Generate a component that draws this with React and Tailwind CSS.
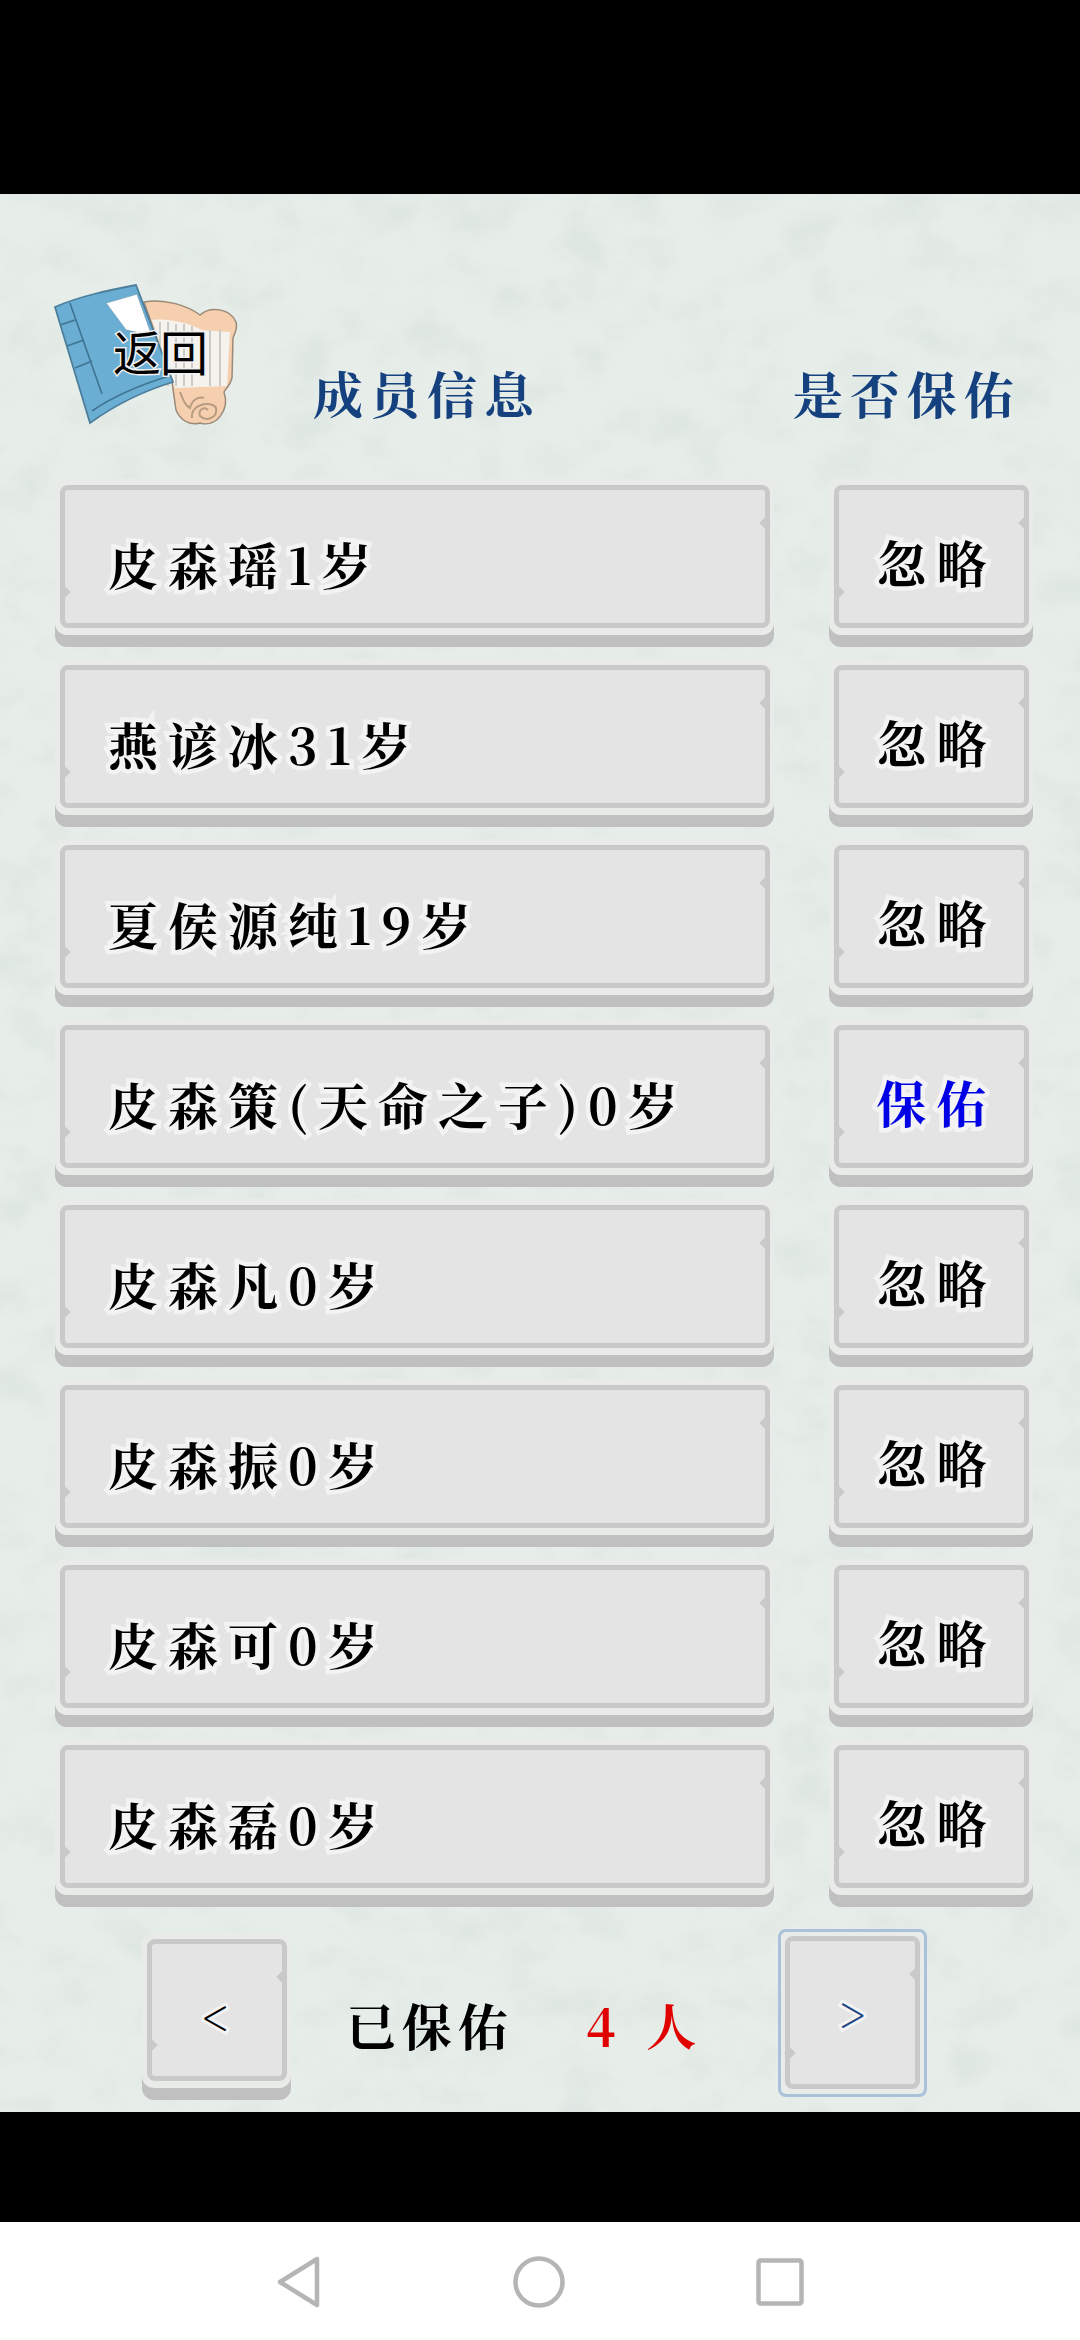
import React from "react";

const serif = "[font-family:'Noto_Serif_CJK_SC','Liberation_Serif','Noto_Sans_CJK_SC',serif]";

const members = [
  ["皮森瑶1岁", false],
  ["燕谚冰31岁", false],
  ["夏侯源纯19岁", false],
  ["皮森策(天命之子)0岁", true],
  ["皮森凡0岁", false],
  ["皮森振0岁", false],
  ["皮森可0岁", false],
  ["皮森磊0岁", false],
];

function Notches() {
  return (
    <>
      <span className="absolute right-[-4px] top-[29px] w-[8px] h-[8px] rotate-45 bg-[#c9c9c9]" />
      <span className="absolute left-[-4px] bottom-[27px] w-[8px] h-[8px] rotate-45 bg-[#c9c9c9]" />
    </>
  );
}

function Card({ className = "", inner = "", children }) {
  return (
    <button className={`block shrink-0 rounded-[12px] bg-[#e9ebe9] pt-[6px] pl-[5px] pr-[4px] pb-[7px] shadow-[0_12px_0_#c0c0c0] ${className}`}>
      <div className={`relative h-full rounded-[8px] border-[5px] border-[#c9c9c9] bg-[#e4e4e4] flex items-center ${inner}`}>
        <Notches />
        {children}
      </div>
    </button>
  );
}

function Book() {
  return (
    <svg viewBox="0 0 210 170" className="w-[210px] h-[170px]">
      <path d="M104 32 C125 28 148 36 160 45 C170 36 190 38 196 52 C198 60 194 64 193 68 L192 108 C190 116 186 118 184 122 C190 140 176 158 160 153 C150 156 140 150 136 140 L132 112 Z" fill="#f5cfae" stroke="#9b8a78" strokeWidth="1.5" />
      <path d="M112 50 C130 48 150 54 162 60 L190 62 L187 116 L135 118 Z" fill="#f6f3ee" />
      <path d="M120 52 V116 M128 52 V116 M136 54 V116 M144 54 V116 M152 56 V116 M170 60 V116 M180 60 V116" stroke="#c8cbc7" strokeWidth="2" />
      <path d="M140 122 C144 132 146 136 150 138 C152 130 158 126 164 128 M152 148 C150 134 172 130 176 138 C178 148 166 152 160 146 C158 140 164 136 168 140" fill="none" stroke="#b89c82" strokeWidth="2" />
      <path d="M15 37 C40 26 70 20 96 15 L133 112 C100 122 75 135 50 153 Z" fill="#6aaed4" stroke="#4d7f9c" strokeWidth="1.8" />
      <path d="M30 33 L62 124 M20 55 L35 50 M27 76 L44 70 M35 98 L52 91" stroke="#3f7391" strokeWidth="1.6" fill="none" />
      <path d="M52 141 C75 125 100 115 129 106" stroke="#3f7391" strokeWidth="1.6" fill="none" />
      <path d="M66 33 L97 24 L112 66 L86 60 Z" fill="#ffffff" stroke="#7aa5bf" strokeWidth="1" />
    </svg>
  );
}

export default function App() {
  return (
    <div className={`w-[1080px] h-[2340px] bg-black flex flex-col overflow-hidden ${serif}`}>
      <div className="h-[194px] shrink-0 bg-black" />
      <main className="relative h-[1918px] shrink-0 bg-[#e7eeea] overflow-hidden">
        <svg className="absolute inset-0 w-full h-full pointer-events-none" aria-hidden="true">
          <filter id="paper">
            <feTurbulence type="fractalNoise" baseFrequency="0.018 0.024" numOctaves="6" seed="7" />
            <feColorMatrix values="0 0 0 0 0.74  0 0 0 0 0.80  0 0 0 0 0.77  1.9 1.9 0 0 -1.75" />
          </filter>
          <rect width="100%" height="100%" filter="url(#paper)" />
        </svg>

        <div className="relative flex flex-col pl-[55px]">
          <header className="flex items-start h-[285px]">
            <button className="relative mt-[76px] ml-[-15px] w-[210px] h-[170px] shrink-0">
              <Book />
              <span className="absolute left-[73px] top-[48px] text-[48px] leading-[64px] font-normal text-black [font-family:'Noto_Sans_CJK_SC',sans-serif] tracking-[-1px] [-webkit-text-stroke:3px_#f0f0f0] [paint-order:stroke_fill]">返回</span>
            </button>
            <h1 className="ml-[63px] mt-[165px] w-[480px] text-[50px] leading-[66px] font-bold tracking-[7px] text-[#15417f] whitespace-nowrap">成员信息</h1>
            <h2 className="mt-[165px] text-[50px] leading-[66px] font-bold tracking-[7px] text-[#15417f] whitespace-nowrap">是否保佑</h2>
          </header>

          <div className="flex flex-col gap-[24px]">
            {members.map(([name, on]) => (
              <div key={name} className="flex gap-[55px] h-[156px]">
                <Card className="w-[719px]" inner="pl-[43px] pt-[12px]">
                  <span className="text-[50px] leading-[60px] font-bold tracking-[10px] text-black whitespace-nowrap [-webkit-text-stroke:9px_#f3f3f3] [paint-order:stroke_fill]">{name}</span>
                </Card>
                <Card className="w-[204px]" inner="justify-center pt-[8px]">
                  <span className={`text-[50px] leading-[60px] font-bold tracking-[10px] mr-[-10px] whitespace-nowrap [-webkit-text-stroke:9px_#f3f3f3] [paint-order:stroke_fill] ${on ? "text-[#0000e6]" : "text-black"}`}>{on ? "保佑" : "忽略"}</span>
                </Card>
              </div>
            ))}
          </div>

          <footer className="flex items-start h-[170px] mt-[12px] pl-[87px]">
            <Card className="w-[149px] h-[155px] mt-[26px]" inner="justify-center pt-[12px]">
              <span className="mr-[3px] text-[48px] leading-[48px] font-normal text-black [-webkit-text-stroke:6px_#f3f3f3] [paint-order:stroke_fill]">&lt;</span>
            </Card>
            <div className="ml-[55px] mt-[87px] w-[237px] text-[50px] leading-[60px] font-bold tracking-[6px] text-black whitespace-nowrap">已保佑</div>
            <div className="mt-[87px] w-[195px] pl-[3px] text-[50px] leading-[60px] font-bold tracking-[9px] text-[#e00000] whitespace-nowrap">4 人</div>
            <button className="relative shrink-0 w-[149px] h-[168px] mt-[22px] rounded-[8px] border-[3px] border-[#a9c2da] bg-[#e9ebe9] pt-[4px] px-[4px] pb-[5px]">
              <div className="relative h-full rounded-[8px] border-[5px] border-[#c9c9c9] bg-[#e4e4e4] flex items-center justify-center">
                <Notches />
                <span className="text-[48px] leading-[48px] font-normal text-[#1f4785] [-webkit-text-stroke:6px_#f3f3f3] [paint-order:stroke_fill]">&gt;</span>
              </div>
            </button>
          </footer>
        </div>
      </main>
      <div className="h-[110px] shrink-0 bg-black" />
      <nav className="flex-1 bg-white flex items-center justify-center gap-[191px] pt-[2px]">
        <svg viewBox="0 0 46 52" className="w-[46px] h-[52px]">
          <path d="M41 3 L4 26 L41 49 Z" fill="none" stroke="#b5b5b5" strokeWidth="4.5" strokeLinejoin="round" />
        </svg>
        <svg viewBox="0 0 52 52" className="w-[52px] h-[52px]">
          <circle cx="26" cy="26" r="23.5" fill="none" stroke="#b5b5b5" strokeWidth="4.5" />
        </svg>
        <svg viewBox="0 0 48 48" className="w-[48px] h-[48px]">
          <rect x="2.5" y="2.5" width="43" height="43" rx="2" fill="none" stroke="#b5b5b5" strokeWidth="4.5" />
        </svg>
      </nav>
    </div>
  );
}
